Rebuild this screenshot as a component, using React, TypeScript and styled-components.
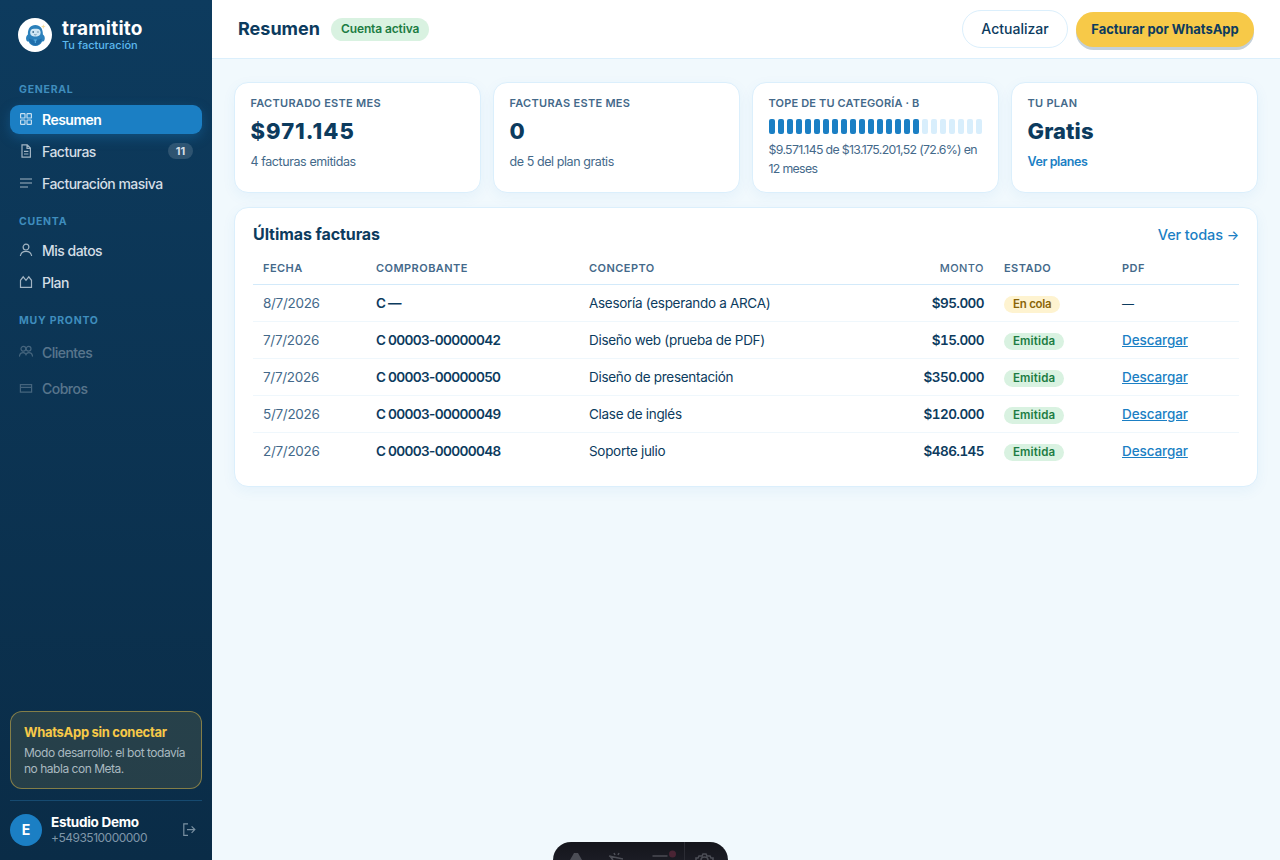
import { ReactNode } from 'react'
import styled, { createGlobalStyle } from 'styled-components'

const colors = {
  navy: '#0c3b5e',
  slate: '#44698a',
  blue: '#1b7fc4',
  sky: '#dbeffc',
  yellow: '#f7c948',
}

type Tone = 'ok' | 'wait'

type Invoice = {
  date: string
  receipt: string
  concept: string
  amount: string
  tone: Tone
  status: string
}

const invoices: Invoice[] = [
  { date: '8/7/2026', receipt: 'C —', concept: 'Asesoría (esperando a ARCA)', amount: '$95.000', tone: 'wait', status: 'En cola' },
  { date: '7/7/2026', receipt: 'C 00003-00000042', concept: 'Diseño web (prueba de PDF)', amount: '$15.000', tone: 'ok', status: 'Emitida' },
  { date: '7/7/2026', receipt: 'C 00003-00000050', concept: 'Diseño de presentación', amount: '$350.000', tone: 'ok', status: 'Emitida' },
  { date: '5/7/2026', receipt: 'C 00003-00000049', concept: 'Clase de inglés', amount: '$120.000', tone: 'ok', status: 'Emitida' },
  { date: '2/7/2026', receipt: 'C 00003-00000048', concept: 'Soporte julio', amount: '$486.145', tone: 'ok', status: 'Emitida' },
]

const METER_STEPS = 24
const METER_FILLED = 17

const Icon = ({ children }: { children: ReactNode }) => (
  <IconSvg viewBox="0 0 14 14" fill="none" stroke="currentColor" strokeWidth="1.2">
    {children}
  </IconSvg>
)

const GridIcon = () => (
  <Icon>
    <rect x="1.6" y="1.6" width="4.4" height="4.4" rx="0.6" />
    <rect x="8" y="1.6" width="4.4" height="4.4" rx="0.6" />
    <rect x="1.6" y="8" width="4.4" height="4.4" rx="0.6" />
    <rect x="8" y="8" width="4.4" height="4.4" rx="0.6" />
  </Icon>
)

const FileIcon = () => (
  <Icon>
    <path d="M3 .9h5.2l3.2 3.2v9H3zM8 .9v3.4h3.4M5 7.4h4.4M5 10h4.4" />
  </Icon>
)

const LinesIcon = () => (
  <Icon>
    <path d="M1 3h12M1 7h12M1 11h8" />
  </Icon>
)

const UserIcon = () => (
  <Icon>
    <circle cx="7" cy="4.1" r="2.9" />
    <path d="M1.4 13c.4-3 2.7-4.7 5.6-4.7s5.2 1.7 5.6 4.7" />
  </Icon>
)

const PlanIcon = () => (
  <Icon>
    <path d="M1.5 12.3V5.3L4.2 1.8 7 5.3l2.8-3.5 2.7 3.5v7z" />
  </Icon>
)

const UsersIcon = () => (
  <Icon>
    <circle cx="4.4" cy="3.8" r="2.4" />
    <circle cx="9.6" cy="3.8" r="2.4" />
    <path d="M.4 11.600c.3-2.600 1.800-3.900 3.800-3.900 1.300 0 2.300.7 2.800 1.900.5-1.200 1.500-1.900 2.800-1.900 2 0 3.500 1.300 3.800 3.900" />
  </Icon>
)

const CardIcon = () => (
  <Icon>
    <path d="M1.400 3.600h11.200v7.600H1.400zM1.400 6.400h11.200" />
  </Icon>
)

const LogoutIcon = () => (
  <Icon>
    <path d="M6 .8H1.800v11.600H6M5 6.600h7.800M9.600 3.400l3.200 3.200-3.200 3.200" />
  </Icon>
)

const Mascot = () => (
  <svg width="34" height="34" viewBox="0 0 34 34">
    <path d="M8.3 22c-.8-2.5.2-4.5 1.6-5.500C9.800 10.400 12.400 7 17.300 7s7.600 3.400 7.600 9.500c1.600 1.200 2.400 3.300 1.600 5.500-.6 1.500-1.700 1.800-2.400 1.500-1.300 3-3.600 4.400-6.800 4.400s-5.500-1.400-6.700-4.400c-.8.3-1.800 0-2.300-1.500z" fill="#2b80bb" />
    <path d="M10.800 20.500c1 4.600 3.200 6.800 6.500 6.800s5.700-2.200 6.700-6.800c-3.600 1.800-9.600 1.800-13.200 0z" fill="#1f6eab" />
    <rect x="12.200" y="10.800" width="10.400" height="7.600" rx="3.800" fill="#cfe6f4" />
    <circle cx="15.200" cy="14" r=".9" fill="#3b6b8f" />
    <path d="M18.900 14h2M16.200 16.400c.7.6 1.600.6 2.300 0" stroke="#3b6b8f" strokeWidth=".7" fill="none" />
    <path d="M15.700 22h3.200M17.300 22v3" stroke="#5fb4e6" strokeWidth="1" />
    <path d="M25.300 6.300l.6 1.700 1.700.6-1.700.6-.6 1.700-.6-1.700-1.700-.6 1.700-.6z" fill="#f6dc9a" />
  </svg>
)

export default function App() {
  return (
    <>
      <GlobalStyle />
      <Shell>
        <Sidebar>
          <Brand>
            <Logo>
              <Mascot />
            </Logo>
            <div>
              <BrandName>tramitito</BrandName>
              <BrandTag>Tu facturación</BrandTag>
            </div>
          </Brand>
          <NavLabel>GENERAL</NavLabel>
          <NavList>
            <NavItem $active>
              <GridIcon />
              Resumen
            </NavItem>
            <NavItem>
              <FileIcon />
              Facturas
              <Count>11</Count>
            </NavItem>
            <NavItem>
              <LinesIcon />
              Facturación masiva
            </NavItem>
          </NavList>
          <NavLabel>CUENTA</NavLabel>
          <NavList>
            <NavItem>
              <UserIcon />
              Mis datos
            </NavItem>
            <NavItem>
              <PlanIcon />
              Plan
            </NavItem>
          </NavList>
          <NavLabel>MUY PRONTO</NavLabel>
          <SoonList>
            <NavItem $soon>
              <UsersIcon />
              Clientes
            </NavItem>
            <NavItem $soon>
              <CardIcon />
              Cobros
            </NavItem>
          </SoonList>
          <Notice>
            <NoticeTitle>WhatsApp sin conectar</NoticeTitle>
            <NoticeText>
              Modo desarrollo: el bot todavía
              <br />
              no habla con Meta.
            </NoticeText>
          </Notice>
          <Account>
            <Avatar>E</Avatar>
            <AccountInfo>
              <AccountName>Estudio Demo</AccountName>
              <AccountPhone>+5493510000000</AccountPhone>
            </AccountInfo>
            <LogoutIcon />
          </Account>
        </Sidebar>
        <Main>
          <Topbar>
            <PageTitle>Resumen</PageTitle>
            <AccountState>Cuenta activa</AccountState>
            <Actions>
              <RefreshButton>Actualizar</RefreshButton>
              <InvoiceButton>Facturar por WhatsApp</InvoiceButton>
            </Actions>
          </Topbar>
          <Content>
            <Cards>
              <Card>
                <CardLabel>FACTURADO ESTE MES</CardLabel>
                <CardValue $spacing="1px">$971.145</CardValue>
                <CardNote>4 facturas emitidas</CardNote>
              </Card>
              <Card>
                <CardLabel>FACTURAS ESTE MES</CardLabel>
                <CardValue>0</CardValue>
                <CardNote>de 5 del plan gratis</CardNote>
              </Card>
              <Card>
                <CardLabel $spacing="0.15px">TOPE DE TU CATEGORÍA · B</CardLabel>
                <Meter>
                  {Array.from({ length: METER_STEPS }, (_, i) => (
                    <Step key={i} $on={i < METER_FILLED} />
                  ))}
                </Meter>
                <LimitNote>
                  $9.571.145 de $13.175.201,52 (72.6%) en
                  <br />
                  12 meses
                </LimitNote>
              </Card>
              <Card>
                <CardLabel>TU PLAN</CardLabel>
                <CardValue>Gratis</CardValue>
                <PlansLink>Ver planes</PlansLink>
              </Card>
            </Cards>
            <Panel>
              <PanelHead>
                <PanelTitle>Últimas facturas</PanelTitle>
                <AllLink>
                  Ver todas <Arrow>→</Arrow>
                </AllLink>
              </PanelHead>
              <Table>
                <colgroup>
                  <Col $width={113} />
                  <Col $width={213} />
                  <Col $width={300} />
                  <Col $width={115} />
                  <Col $width={118} />
                  <Col $width={127} />
                </colgroup>
                <thead>
                  <tr>
                    <Th>FECHA</Th>
                    <Th>COMPROBANTE</Th>
                    <Th>CONCEPTO</Th>
                    <Th $right>MONTO</Th>
                    <Th>ESTADO</Th>
                    <Th>PDF</Th>
                  </tr>
                </thead>
                <tbody>
                  {invoices.map((invoice) => (
                    <Row key={invoice.receipt}>
                      <DateCell>{invoice.date}</DateCell>
                      <ReceiptCell>{invoice.receipt}</ReceiptCell>
                      <Cell>{invoice.concept}</Cell>
                      <AmountCell>{invoice.amount}</AmountCell>
                      <Cell>
                        <Status $tone={invoice.tone}>{invoice.status}</Status>
                      </Cell>
                      <Cell>{invoice.tone === 'ok' ? <Download>Descargar</Download> : <Dash>—</Dash>}</Cell>
                    </Row>
                  ))}
                </tbody>
              </Table>
            </Panel>
          </Content>
        </Main>
      </Shell>
      <DevBar>
        <svg width="175" height="18" viewBox="1 0 175 18" fill="none" stroke="#4b4d55" strokeWidth="1.6">
          <path d="M18 18l4-7h4l4 7z" fill="#4b4d55" stroke="none" />
          <path d="M57 14l14 3M58 14l3 4M62 11l1 2M67 11l-1 2" />
          <path d="M100.500 14h15" />
          <circle cx="120.500" cy="12" r="3.500" fill="#4a2434" stroke="none" />
          <path d="M132.500 0v18" stroke="#2b2c34" strokeWidth="1" />
          <path d="M144 18v-2h2l1-2 3 0 1-2h3l1 2 3 0 1 2h2v2M149 18c0-4 7-4 7 0" />
        </svg>
      </DevBar>
    </>
  )
}

const GlobalStyle = createGlobalStyle`
  * {
    box-sizing: border-box;
  }
  body {
    margin: 0;
    background: #f1f9fd;
    color: ${colors.navy};
    font-family: Inter, 'Liberation Sans', sans-serif;
    font-size: 14px;
    overflow: hidden;
  }
`

const Shell = styled.div`
  display: flex;
  height: 860px;
`

const Sidebar = styled.aside`
  display: flex;
  flex-direction: column;
  width: 212px;
  flex-shrink: 0;
  padding: 18px 10px 14px;
  background: linear-gradient(180deg, #0d3b5e 0%, #0a2c47 100%);
`

const Brand = styled.div`
  display: flex;
  align-items: center;
  gap: 10px;
  height: 34px;
  padding-left: 8px;
  margin-bottom: 15px;
`

const Logo = styled.div`
  width: 34px;
  height: 34px;
  border-radius: 50%;
  background: #fff;
  overflow: hidden;
`

const BrandName = styled.div`
  color: #fff;
  font-size: 19px;
  font-weight: 700;
  line-height: 19px;
  letter-spacing: 0.25px;
`

const BrandTag = styled.div`
  color: #5cb8ee;
  font-size: 11px;
  font-weight: 500;
  line-height: 14px;
  letter-spacing: 0;
`

const NavLabel = styled.div`
  padding: 16px 9px 8px;
  color: #3f8dbd;
  font-size: 10.5px;
  font-weight: 700;
  line-height: 14px;
  letter-spacing: 0.75px;

  nav + & {
    padding: 17px 9px 7px;
  }
`

const NavList = styled.nav`
  display: flex;
  flex-direction: column;
  gap: 3px;
`

const SoonList = styled(NavList)`
  padding-top: 1px;
`

const NavItem = styled.a<{ $active?: boolean; $soon?: boolean }>`
  display: flex;
  align-items: center;
  gap: 9px;
  height: ${({ $soon }) => ($soon ? '33px' : '29px')};
  padding: 0 9px 1px;
  border-radius: 9px;
  color: ${({ $active }) => ($active ? '#fff' : '#d4dee6')};
  background: ${({ $active }) => ($active ? colors.blue : 'transparent')};
  box-shadow: ${({ $active }) => ($active ? '0 4px 12px rgba(27, 127, 196, 0.35)' : 'none')};
  font-size: 14px;
  font-weight: ${({ $active }) => ($active ? 600 : 500)};
  letter-spacing: -0.52px;
  opacity: ${({ $soon }) => ($soon ? 0.38 : 1)};
`

const IconSvg = styled.svg`
  width: 14px;
  height: 14px;
  flex-shrink: 0;
  opacity: 0.75;
`

const Count = styled.span`
  margin-left: auto;
  width: 25px;
  height: 16px;
  border-radius: 8px;
  background: rgba(255, 255, 255, 0.14);
  font-size: 11px;
  font-weight: 700;
  line-height: 16px;
  letter-spacing: 0;
  text-align: center;
`

const Notice = styled.div`
  height: 78px;
  margin-top: auto;
  padding: 12px 13px;
  border: 1px solid rgba(247, 201, 72, 0.45);
  border-radius: 12px;
  background: rgba(247, 201, 72, 0.12);
`

const NoticeTitle = styled.div`
  color: ${colors.yellow};
  font-size: 13px;
  font-weight: 700;
  line-height: 17px;
  letter-spacing: -0.3px;
`

const NoticeText = styled.div`
  margin-top: 4px;
  color: #a9b9c0;
  font-size: 12px;
  line-height: 16px;
  letter-spacing: -0.48px;
  white-space: nowrap;
`

const Account = styled.div`
  display: flex;
  align-items: center;
  margin-top: 11px;
  padding: 13px 6px 0 0;
  border-top: 1px solid #164a70;
  color: #9fb2c0;
`

const Avatar = styled.div`
  width: 32px;
  height: 32px;
  border-radius: 50%;
  background: ${colors.blue};
  color: #fff;
  font-weight: 700;
  line-height: 31px;
  text-align: center;
`

const AccountInfo = styled.div`
  flex: 1;
  margin-left: 9px;
`

const AccountName = styled.div`
  color: #fff;
  font-size: 13.5px;
  font-weight: 700;
  line-height: 16px;
  letter-spacing: -0.28px;
`

const AccountPhone = styled.div`
  color: #7f96a8;
  font-size: 12px;
  line-height: 16px;
  letter-spacing: -0.5px;
`

const Main = styled.main`
  flex: 1;
  min-width: 0;
`

const Topbar = styled.header`
  display: flex;
  align-items: center;
  height: 59px;
  padding: 0 26px;
  border-bottom: 1px solid ${colors.sky};
  background: #fff;
`

const PageTitle = styled.h1`
  margin: 0 11px 0 0;
  padding-bottom: 1px;
  font-size: 18px;
  font-weight: 700;
  letter-spacing: 0;
`

const AccountState = styled.span`
  height: 23px;
  padding: 0 10px;
  border-radius: 12px;
  background: #d9f2e1;
  color: #1c7c43;
  font-size: 12px;
  font-weight: 600;
  line-height: 22px;
  letter-spacing: -0.12px;
`

const Actions = styled.div`
  display: flex;
  align-items: center;
  gap: 8px;
  margin-left: auto;
`

const Button = styled.button`
  border-radius: 19px;
  padding: 0;
  color: ${colors.navy};
  font-family: inherit;
  white-space: nowrap;
`

const RefreshButton = styled(Button)`
  width: 106px;
  height: 38px;
  padding-bottom: 2px;
  border: 1px solid ${colors.sky};
  background: #fff;
  font-size: 14px;
  font-weight: 500;
`

const InvoiceButton = styled(Button)`
  width: 178px;
  height: 35px;
  border: 0;
  background: ${colors.yellow};
  box-shadow: 0 3px 0 #c4d0d9;
  font-size: 13px;
  font-weight: 700;
  letter-spacing: -0.04px;
`

const Content = styled.div`
  display: flex;
  flex-direction: column;
  gap: 14px;
  padding: 23px 22px;
`

const Cards = styled.div`
  display: grid;
  grid-template-columns: repeat(4, 1fr);
  gap: 12px;
`

const Surface = styled.section`
  border: 1px solid ${colors.sky};
  border-radius: 14px;
  background: #fff;
  box-shadow: 0 4px 14px rgba(27, 127, 196, 0.06);
`

const Card = styled(Surface)`
  height: 111px;
  padding: 12px 15px 12px 15.5px;
  min-width: 0;
`

const CardLabel = styled.div<{ $spacing?: string }>`
  color: ${colors.slate};
  font-size: 11px;
  font-weight: 600;
  line-height: 17px;
  letter-spacing: ${({ $spacing = '0.28px' }) => $spacing};
  white-space: nowrap;
`

const CardValue = styled.div<{ $spacing?: string }>`
  margin-top: 4px;
  font-size: 22px;
  font-weight: 800;
  line-height: 30px;
  letter-spacing: ${({ $spacing = '0.1px' }) => $spacing};
`

const CardNote = styled.div`
  margin-top: 6px;
  color: ${colors.slate};
  font-size: 12.5px;
  line-height: 19px;
  letter-spacing: -0.42px;
`

const LimitNote = styled(CardNote)`
  font-size: 12.3px;
  letter-spacing: -0.66px;
  white-space: nowrap;
`

const PlansLink = styled(CardNote)`
  color: ${colors.blue};
  font-weight: 600;
`

const Meter = styled.div`
  display: flex;
  gap: 3px;
  height: 15px;
  margin: 7px 1px 0 0;
`

const Step = styled.span<{ $on: boolean }>`
  flex: 1;
  border-radius: 2px;
  background: ${({ $on }) => ($on ? colors.blue : '#d8eefc')};
`

const Panel = styled(Surface)`
  height: 280px;
  padding: 16px 18px;
`

const PanelHead = styled.div`
  display: flex;
  align-items: center;
  justify-content: space-between;
  height: 20px;
`

const PanelTitle = styled.h2`
  margin: 0;
  font-size: 16px;
  font-weight: 700;
  letter-spacing: -0.08px;
`

const AllLink = styled.a`
  color: ${colors.blue};
  font-size: 14.5px;
  font-weight: 500;
  letter-spacing: -0.1px;
`

const Arrow = styled.span`
  font-size: 13px;
`

const Table = styled.table`
  width: 100%;
  margin-top: 7px;
  border-collapse: separate;
  border-spacing: 0;
  table-layout: fixed;
`

const Col = styled.col<{ $width: number }>`
  width: ${({ $width }) => $width}px;
`

const Th = styled.th<{ $right?: boolean }>`
  height: 34px;
  padding: 0 10px;
  border-bottom: 1px solid #d3eafa;
  color: ${colors.slate};
  font-size: 11px;
  font-weight: ${({ $right }) => ($right ? 500 : 600)};
  letter-spacing: 0.45px;
  text-align: ${({ $right }) => ($right ? 'right' : 'left')};
`

const Cell = styled.td`
  height: 37.1px;
  padding: 0 10px;
  border-bottom: 1px solid #eff7fc;
  font-size: 13.5px;
  letter-spacing: -0.3px;
  white-space: nowrap;
`

const Row = styled.tr`
  &:last-child ${Cell} {
    padding-bottom: 1px;
    border-bottom: 0;
  }
`

const DateCell = styled(Cell)`
  color: ${colors.slate};
`

const ReceiptCell = styled(Cell)`
  font-weight: 600;
  letter-spacing: -0.65px;
`

const AmountCell = styled(Cell)`
  font-weight: 600;
  font-variant-numeric: tabular-nums;
  letter-spacing: -0.55px;
  text-align: right;
`

const Status = styled.span<{ $tone: Tone }>`
  display: inline-block;
  position: relative;
  top: 1px;
  height: 17px;
  padding: 0 9px;
  border-radius: 9px;
  background: ${({ $tone }) => ($tone === 'ok' ? '#d9f2e1' : '#fef3d0')};
  color: ${({ $tone }) => ($tone === 'ok' ? '#1c7c43' : '#8a6508')};
  font-size: 11.5px;
  font-weight: 600;
  line-height: 17px;
  letter-spacing: ${({ $tone }) => ($tone === 'ok' ? '0.15px' : '-0.25px')};
`

const Download = styled.a`
  color: ${colors.blue};
  font-weight: 500;
  letter-spacing: -0.1px;
  text-decoration: underline;
`

const Dash = styled.span`
  font-size: 12px;
`

const DevBar = styled.div`
  position: fixed;
  bottom: 0;
  left: 553px;
  width: 175px;
  height: 18px;
  border-radius: 20px 20px 0 0;
  background: linear-gradient(180deg, #14151b, #1b1c24);
  overflow: hidden;
`
